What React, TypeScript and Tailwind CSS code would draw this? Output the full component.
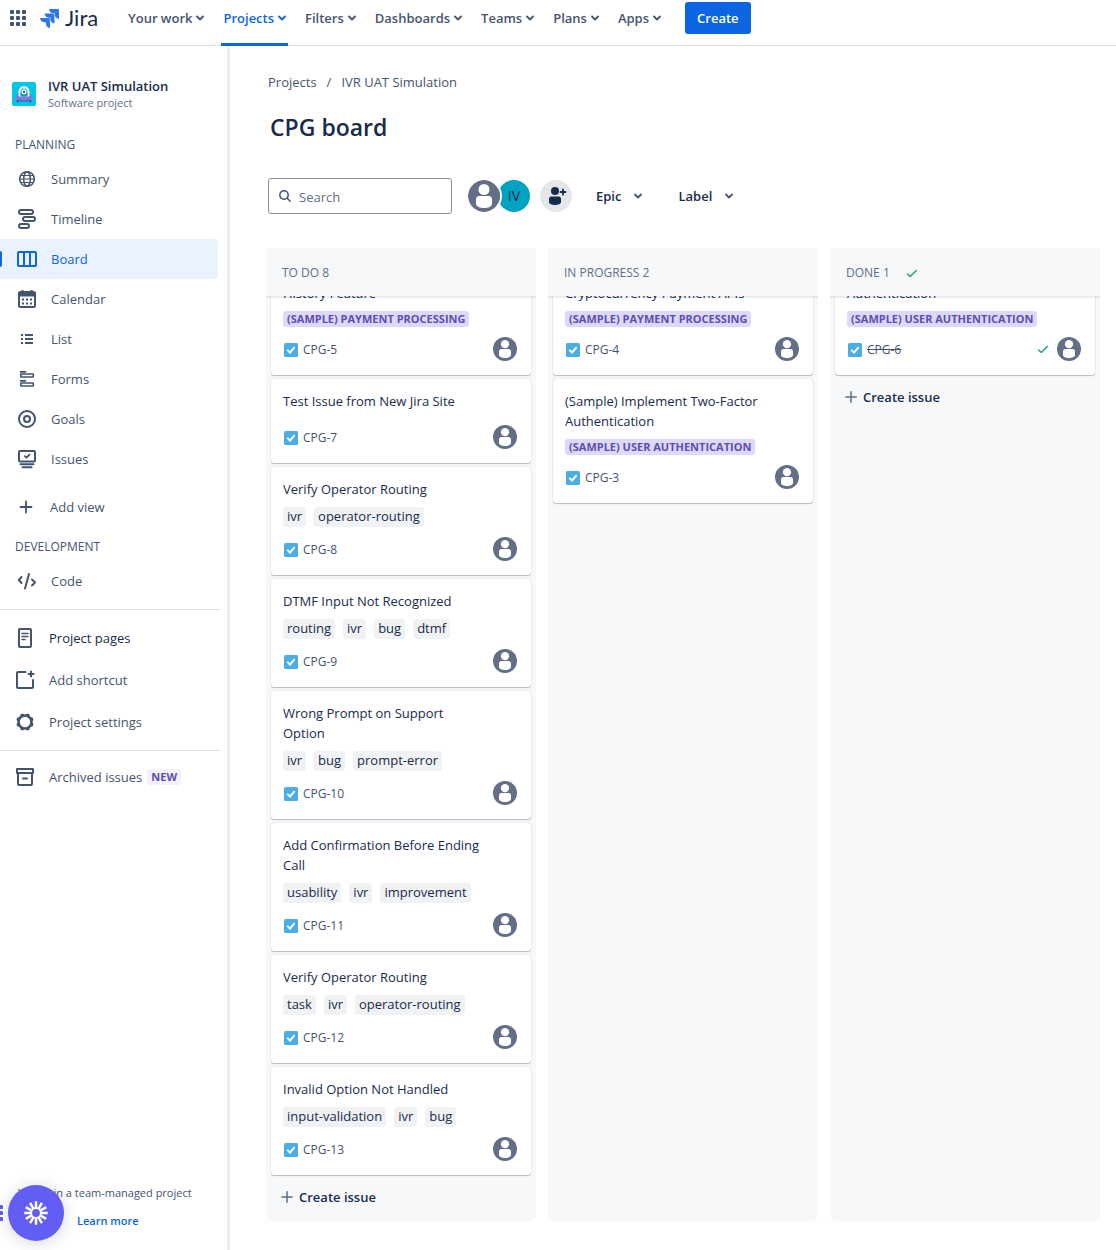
import React from "react";

type Issue = {
  id: string;
  title: string;
  epic?: string;
  labels?: string[];
  done?: boolean;
};

type Column = { name: string; count: number; issues: Issue[]; done?: boolean; canCreate?: boolean };

const columns: Column[] = [
  {
    name: "TO DO",
    count: 8,
    canCreate: true,
    issues: [
      { id: "CPG-5", title: "History Feature", epic: "(SAMPLE) PAYMENT PROCESSING" },
      { id: "CPG-7", title: "Test Issue from New Jira Site" },
      { id: "CPG-8", title: "Verify Operator Routing", labels: ["ivr", "operator-routing"] },
      { id: "CPG-9", title: "DTMF Input Not Recognized", labels: ["routing", "ivr", "bug", "dtmf"] },
      { id: "CPG-10", title: "Wrong Prompt on Support Option", labels: ["ivr", "bug", "prompt-error"] },
      { id: "CPG-11", title: "Add Confirmation Before Ending Call", labels: ["usability", "ivr", "improvement"] },
      { id: "CPG-12", title: "Verify Operator Routing", labels: ["task", "ivr", "operator-routing"] },
      { id: "CPG-13", title: "Invalid Option Not Handled", labels: ["input-validation", "ivr", "bug"] },
    ],
  },
  {
    name: "IN PROGRESS",
    count: 2,
    issues: [
      { id: "CPG-4", title: "Cryptocurrency Payment APIs", epic: "(SAMPLE) PAYMENT PROCESSING" },
      { id: "CPG-3", title: "(Sample) Implement Two-Factor Authentication", epic: "(SAMPLE) USER AUTHENTICATION" },
    ],
  },
  {
    name: "DONE",
    count: 1,
    done: true,
    canCreate: true,
    issues: [{ id: "CPG-6", title: "Authentication", epic: "(SAMPLE) USER AUTHENTICATION", done: true }],
  },
];

function Chevron({ className = "" }: { className?: string }) {
  return (
    <svg className={`h-2 w-2 shrink-0 ${className}`} viewBox="0 0 8 8" fill="none" stroke="currentColor" strokeWidth="1.8" strokeLinecap="round" strokeLinejoin="round" aria-hidden="true">
      <path d="M1 2.5 4 5.5 7 2.5" />
    </svg>
  );
}

function Tick() {
  return (
    <svg className="h-3 w-3" viewBox="0 0 12 12" fill="none" stroke="#22a06b" strokeWidth="1.4" strokeLinecap="round" strokeLinejoin="round" role="img" aria-label="Done">
      <path d="M1.5 7 4.3 9.5 10.3 3.500" />
    </svg>
  );
}

function Plus() {
  return (
    <svg className="h-3 w-3 text-[#626f86]" viewBox="0 0 12 12" stroke="currentColor" strokeWidth="1.5" strokeLinecap="round" aria-hidden="true">
      <path d="M6 .8v10.4M.8 6h10.4" />
    </svg>
  );
}

function Person({ className }: { className: string }) {
  return (
    <svg className={className} viewBox="0 0 32 32" role="img" aria-label="Unassigned">
      <circle cx="16" cy="16" r="16" fill="#626f86" />
      <circle cx="16" cy="9.5" r="5.5" fill="#fff" />
      <path d="M8 19.5a3.5 3.5 0 0 1 3.5-3.5h9a3.5 3.5 0 0 1 3.5 3.5v4.200c0 2.800-4 4.300-8 4.300s-8-1.500-8-4.300z" fill="#fff" />
    </svg>
  );
}

function TaskIcon() {
  return (
    <svg className="h-3.5 w-3.5" viewBox="0 0 14 14" role="img" aria-label="Task">
      <rect width="14" height="14" rx="1.500" fill="#4bade8" />
      <path d="M3.800 7.400 6 9.500 10.200 4.700" fill="none" stroke="#fff" strokeWidth="2" strokeLinecap="round" />
    </svg>
  );
}

const stroke = { fill: "none", stroke: "currentColor", strokeWidth: 2, strokeLinecap: "round", strokeLinejoin: "round" } as const;

const icons: Record<string, React.ReactNode> = {
  Summary: (
    <g {...stroke} strokeWidth="1.500">
      <circle cx="12" cy="12" r="7.300" />
      <ellipse cx="12" cy="12" rx="3.300" ry="7.300" />
      <path d="M4.700 12h14.600M6 8.500h12M6 15.500h12" strokeWidth="1.200" />
    </g>
  ),
  Timeline: (
    <g {...stroke}>
      <rect x="4" y="3" width="14" height="4" rx="2" />
      <rect x="8" y="10" width="12" height="4" rx="2" />
      <rect x="4" y="17" width="10" height="4" rx="2" />
    </g>
  ),
  Board: (
    <g {...stroke}>
      <rect x="3" y="5" width="18" height="14" rx="1" />
      <path d="M9 5v14M15 5v14" />
    </g>
  ),
  Calendar: (
    <g>
      <rect x="4" y="5" width="16" height="15" rx="1.500" {...stroke} />
      <path d="M3 5h18v4.500H3zM6.500 3h2v3h-2zM15.500 3h2v3h-2z" fill="currentColor" />
      <path d="M7 11.500h2v2H7zm4 0h2v2h-2zm4 0h2v2h-2zM7 15.500h2v2H7zm4 0h2v2h-2zm4 0h2v2h-2z" fill="currentColor" />
    </g>
  ),
  List: <path d="M6 7h2v2H6zm0 4h2v2H6zm0 4h2v2H6zM10 7h8v2h-8zm0 4h8v2h-8zm0 4h8v2h-8z" fill="currentColor" />,
  Forms: (
    <g {...stroke} strokeWidth="1.700">
      <path d="M5.500 4.800h5M5.500 13.800h5" />
      <rect x="5.800" y="7" width="12.500" height="3" rx=".5" />
      <rect x="5.800" y="16" width="12.500" height="3" rx=".5" />
    </g>
  ),
  Goals: (
    <g {...stroke}>
      <circle cx="12" cy="12" r="8" />
      <circle cx="12" cy="12" r="3" />
    </g>
  ),
  Issues: (
    <g {...stroke}>
      <rect x="4" y="4" width="16" height="10.500" rx="1" />
      <path d="M9.800 9.200l1.700 1.500 3-3" strokeWidth="1.800" />
      <path d="M5.500 17.200h13M7.500 20.200h9" />
    </g>
  ),
  "Add view": <path d="M12 6.500v11M6.500 12h11" {...stroke} strokeWidth="1.800" />,
  Code: <path d="M6.500 8 3.800 11l2.700 3M17 10.500l3 3-3 3M14 5l-4 14.500" {...stroke} />,
  "Project pages": (
    <g {...stroke}>
      <rect x="6" y="3" width="12" height="18" rx="1" />
      <path d="M9 7.500h6M9 10.500h6M9 13.500h3" strokeWidth="1.600" />
    </g>
  ),
  "Add shortcut": (
    <g {...stroke}>
      <path d="M12.500 4H5a1 1 0 0 0-1 1v14a1 1 0 0 0 1 1h14a1 1 0 0 0 1-1v-7" />
      <path d="M18 3.500v5M15.500 6h5" />
    </g>
  ),
  "Project settings": (
    <g>
      <circle cx="12" cy="12" r="6.500" fill="none" stroke="currentColor" strokeWidth="2.600" />
      {[22.5, 67.5, 112.5, 157.5, 202.5, 247.5, 292.5, 337.5].map((a) => (
        <rect key={a} x="10.200" y="3.200" width="3.600" height="3" rx="1.200" fill="currentColor" transform={`rotate(${a} 12 12)`} />
      ))}
    </g>
  ),
  "Archived issues": (
    <g {...stroke}>
      <rect x="4" y="4" width="16" height="4" />
      <path d="M5 8v11a1 1 0 0 0 1 1h12a1 1 0 0 0 1-1V8M10 13.500h4" />
    </g>
  ),
};

function NavIcon({ name }: { name: string }) {
  return (
    <svg className={`h-6 w-6 shrink-0 ${name === "Board" ? "text-[#0c66e4]" : "text-[#44546f]"}`} viewBox="0 0 24 24" aria-hidden="true">
      {icons[name]}
    </svg>
  );
}

function SideLink({ name, active }: { name: string; active?: boolean }) {
  return (
    <a
      href="#"
      aria-current={active ? "page" : undefined}
      className={`relative mr-[9px] flex h-10 items-center gap-3 rounded-r pl-[15px] ${active ? "bg-[#e9f2ff] text-[#0c66e4]" : "text-[#44546f]"}`}
    >
      {active && <span className="absolute left-0 top-3 h-4 w-0.5 rounded-r bg-[#0c66e4]" />}
      <NavIcon name={name} />
      {name}
    </a>
  );
}

function LowerLink({ name, dark, badge }: { name: string; dark?: boolean; badge?: string }) {
  return (
    <a href="#" className={`flex h-[42px] items-center pl-[13px] ${dark ? "text-[#172b4d]" : "text-[#44546f]"}`}>
      <NavIcon name={name} />
      <span className="ml-3">{name}</span>
      {badge && <span className="ml-[5px] rounded-[3px] bg-[#f3f0ff] px-1 text-[11px] leading-4 font-bold text-[#5e4db2]">{badge}</span>}
    </a>
  );
}

function TopNav() {
  const items = ["Your work", "Projects", "Filters", "Dashboards", "Teams", "Plans", "Apps"];
  return (
    <header className="flex h-[46px] shrink-0 border-b border-[#dcdfe4] pl-1.5">
      <button aria-label="Switch to another product" className="flex h-9 w-6 items-center justify-center text-[#44546f]">
        <svg className="h-4 w-4" viewBox="0 0 16 16" fill="currentColor" aria-hidden="true">
          {[0, 6, 12].map((y) => [0, 6, 12].map((x) => <rect key={`${x}-${y}`} x={x} y={y} width="4" height="4" rx="1" />))}
        </svg>
      </button>
      <a href="#" className="ml-2.5 flex h-9 w-[60px] items-center gap-1.5 font-['Lato',sans-serif] text-[22px] leading-6 font-normal text-[#172b4d]">
        <svg className="h-[19px] w-[19px] shrink-0" viewBox="0 0 24 24" aria-hidden="true">
          <defs>
            <linearGradient id="mark" x1="1" y1="0" x2="0" y2="1">
              <stop offset="0" stopColor="#3b82f0" />
              <stop offset=".4" stopColor="#2b75e6" />
              <stop offset=".7" stopColor="#388bff" />
            </linearGradient>
          </defs>
          <g fill="url(#mark)">
            <path d="M11.571 11.513H0a5.218 5.218 0 0 0 5.232 5.215h2.130v2.057A5.215 5.215 0 0 0 12.575 24V12.518a1.005 1.005 0 0 0-1.005-1.005z" />
            <path d="M17.294 5.757H5.736a5.215 5.215 0 0 0 5.215 5.214h2.129v2.058a5.218 5.218 0 0 0 5.215 5.214V6.758a1.001 1.001 0 0 0-1.001-1.001z" />
            <path d="M23.013 0H11.455a5.215 5.215 0 0 0 5.215 5.215h2.129v2.057A5.215 5.215 0 0 0 24 12.483V1.005A1.001 1.001 0 0 0 23.013 0Z" />
          </g>
        </svg>
        Jira
      </a>
      <nav aria-label="Main" className="ml-[26px] flex gap-[15px] font-semibold text-[#44546f]">
        {items.map((item) => (
          <button
            key={item}
            className={`flex h-[46px] items-center gap-1 border-b-[3px] px-0.5 pb-[7px] ${item === "Projects" ? "border-[#0c66e4] text-[#0c66e4]" : "border-transparent"}`}
          >
            {item}
            <Chevron />
          </button>
        ))}
      </nav>
      <button className="mt-0.5 ml-[22px] h-8 rounded-[3px] bg-[#0c66e4] px-3 font-semibold text-white">Create</button>
    </header>
  );
}

function Sidebar() {
  return (
    <aside className="flex w-[230px] shrink-0 flex-col border-r-[3px] border-[#ebecf0]">
      <div className="flex items-center gap-3 px-3 pt-[31px]">
        <svg className="h-6 w-6 shrink-0" viewBox="0 0 24 24" aria-hidden="true">
          <rect width="24" height="24" rx="2" fill="#00c7e6" />
          <path d="M5.500 19.500l2-3M18.500 19.500l-2-3" stroke="#5243aa" strokeWidth="2" strokeLinecap="round" />
          <ellipse cx="12" cy="15" rx="9.300" ry="3.800" fill="#8777d9" />
          <path d="M6.500 14V9.500a5.500 5.500 0 0 1 11 0V14c-2.500 1.500-8.500 1.500-11 0z" fill="#dff7fc" />
          <path d="M8.500 14v-4a3.500 3.500 0 0 1 7 0v4c-2 1-5 1-7 0z" fill="#00a3bf" />
          <circle cx="12" cy="9.800" r="2.500" fill="#fff" />
          <circle cx="12" cy="9.800" r="1.100" fill="#172b4d" />
          <path d="M8.500 14c2 1 5 1 7 0v2c-2 1-5 1-7 0z" fill="#8777d9" />
          <path d="M8 18.500c2 1 6 1 8 0" stroke="#5243aa" strokeWidth="1.200" fill="none" />
        </svg>
        <div>
          <p className="leading-[18px] font-semibold text-[#172b4d]">IVR UAT Simulation</p>
          <p className="text-[11px] leading-4 text-[#626f86]">Software project</p>
        </div>
      </div>
      <nav aria-label="Project" className="flex flex-col">
        <h2 className="mt-[26px] mb-1.5 pl-[15px] text-[12px] leading-4 font-medium text-[#44546f]">PLANNING</h2>
        {["Summary", "Timeline", "Board", "Calendar", "List", "Forms", "Goals", "Issues"].map((n) => (
          <SideLink key={n} name={n} active={n === "Board"} />
        ))}
        <button className="mt-2 flex h-10 items-center gap-3 pl-3.5 text-[#44546f]">
          <NavIcon name="Add view" />
          Add view
        </button>
        <h2 className="mt-3 mb-1.5 pl-[15px] text-[12px] leading-4 font-medium text-[#44546f]">DEVELOPMENT</h2>
        <SideLink name="Code" />
        <div className="mt-2 mr-[7px] border-y border-[#dcdfe4] py-[7px]">
          <LowerLink name="Project pages" dark />
          <LowerLink name="Add shortcut" />
          <LowerLink name="Project settings" />
        </div>
        <div className="mt-[5px]">
          <LowerLink name="Archived issues" badge="NEW" />
        </div>
      </nav>
      <footer className="mt-auto pb-5 pl-[18px] text-[11px] leading-[18px]">
        <p className="text-[#44546f]">You're in a team-managed project</p>
        <p className="mt-2.5 pl-[59px]">
          <a href="#" className="font-semibold text-[#0c66e4]">Learn more</a>
        </p>
      </footer>
    </aside>
  );
}

function Card({ issue }: { issue: Issue }) {
  const tagged = issue.epic || issue.labels;
  return (
    <article className="rounded-[3px] bg-white pt-3 pr-3.5 pb-3.5 pl-3 shadow-[0_1px_1px_rgba(9,30,66,0.25),0_0_1px_rgba(9,30,66,0.31)]">
      <h3 className="pr-8 leading-5 text-[#172b4d]">{issue.title}</h3>
      {issue.epic && (
        <p className="mt-2 flex">
          <span className="rounded-[3px] bg-[#dfd8fd] px-1 text-[11px] leading-4 font-bold whitespace-nowrap text-[#5e4db2]">{issue.epic}</span>
        </p>
      )}
      {issue.labels && (
        <ul className="mt-2 flex gap-2">
          {issue.labels.map((l) => (
            <li key={l} className="rounded-[3px] bg-[#f1f2f4] px-1 pb-0.5 leading-[18px] text-[#172b4d]">
              {l}
            </li>
          ))}
        </ul>
      )}
      <div className={`flex h-6 items-center ${tagged ? "mt-2.5" : "mt-3.5"}`}>
        <span className="flex items-center gap-[5px] pt-0.5 pl-px">
          <TaskIcon />
          <a href="#" className={`text-[12px] leading-4 font-medium text-[#44546f] ${issue.done ? "line-through" : ""}`}>{issue.id}</a>
        </span>
        <span className="ml-auto flex items-center gap-2">
          {issue.done && <Tick />}
          <Person className="h-6 w-6" />
        </span>
      </div>
    </article>
  );
}

function BoardColumn({ column }: { column: Column }) {
  return (
    <section className="flex min-w-0 flex-col rounded-b-md bg-[#f7f8f9]">
      <h2 className="z-10 flex h-12 items-center gap-4 px-4 pt-0.5 text-[12px] font-medium text-[#626f86] shadow-[0_2px_0_rgba(9,30,66,0.08)]">
        {column.name} {column.count}
        {column.done && <Tick />}
      </h2>
      <div className="overflow-hidden px-[5px] pb-1">
        <div className="-mt-[25px] flex flex-col gap-1">
          {column.issues.map((issue) => (
            <Card key={issue.id} issue={issue} />
          ))}
        </div>
      </div>
      {column.canCreate && (
        <button className="mb-1 flex h-9 items-center gap-1.5 pl-[15px] font-semibold text-[#172b4d]">
          <Plus />
          Create issue
        </button>
      )}
    </section>
  );
}

function FilterButton({ label }: { label: string }) {
  return (
    <button className="flex h-8 items-center gap-[13px] font-semibold text-[#172b4d]">
      {label}
      <Chevron className="text-[#44546f]" />
    </button>
  );
}

function HelpBubble() {
  return (
    <div className="absolute bottom-[9px] left-0 flex items-center gap-[5px]">
      <svg className="h-4 w-[3px]" viewBox="0 0 3 16" fill="#625df5" aria-hidden="true">
        <path d="M0 0h1.500a1.500 1.500 0 0 1 0 4H0zM0 6h1.500a1.500 1.500 0 0 1 0 4H0zM0 12h1.500a1.500 1.500 0 0 1 0 4H0z" />
      </svg>
      <button aria-label="Open recorder" className="flex h-14 w-14 items-center justify-center rounded-full bg-[#625df5] shadow-[0_2px_16px_rgba(0,0,0,0.16)]">
        <svg className="h-6 w-6" viewBox="-12 -12 24 24" fill="none" stroke="#fff" aria-hidden="true">
          <circle r="4.800" strokeWidth="1.800" />
          {Array.from({ length: 12 }, (_, i) => (
            <path key={i} d="M0-4.800V-11.800" strokeWidth="2.500" transform={`rotate(${i * 30})`} />
          ))}
        </svg>
      </button>
    </div>
  );
}

export default function App() {
  return (
    <div className="relative flex min-h-screen flex-col bg-white font-['Open_Sans','Noto_Sans',sans-serif] text-[13px] leading-5">
      <TopNav />
      <div className="flex grow">
        <Sidebar />
        <main className="flex min-w-0 grow flex-col pt-[26px] pr-4 pb-[29px] pl-9">
          <nav aria-label="Breadcrumb" className="flex gap-2.5 pl-0.5 text-[#44546f]">
            <a href="#">Projects</a>
            <span>/</span>
            <a href="#">IVR UAT Simulation</a>
          </nav>
          <h1 className="mt-[21px] pl-1 text-[23px] leading-7 font-semibold text-[#172b4d]">CPG board</h1>
          <div className="mt-[37px] flex items-center pl-0.5">
            <label className="flex h-9 w-[184px] items-center gap-2 rounded-[3px] border border-[#8590a2] px-2.5">
              <svg className="h-3 w-3 shrink-0 text-[#44546f]" viewBox="0 0 12 12" fill="none" stroke="currentColor" strokeWidth="1.500" strokeLinecap="round" aria-hidden="true">
                <circle cx="5" cy="5" r="4.200" />
                <path d="M8.200 8.200 11.200 11.200" />
              </svg>
              <input type="text" aria-label="Search" placeholder="Search" className="w-full min-w-0 bg-transparent pt-0.5 outline-none placeholder:text-[#626f86]" />
            </label>
            <div className="ml-4 flex items-center">
              <Person className="relative z-10 h-8 w-8 rounded-full shadow-[0_0_0_2px_#fff]" />
              <span className="-ml-0.5 flex h-8 w-8 items-center justify-center rounded-full bg-[#00a3bf] text-[14px] font-medium text-[#172b4d]">IV</span>
            </div>
            <button aria-label="Add people" className="ml-2.5 flex h-8 w-8 items-center justify-center rounded-full bg-[#e4e6ea]">
              <svg className="h-6 w-6" viewBox="0 0 24 24" fill="#172b4d" aria-hidden="true">
                <circle cx="11" cy="7" r="4" />
                <path d="M5 15a2.500 2.500 0 0 1 2.500-2.500h7A2.500 2.500 0 0 1 17 15v3c0 2-3 3-6 3s-6-1-6-3z" />
                <path d="M19 5.500v5M16.500 8h5" stroke="#172b4d" strokeWidth="1.800" strokeLinecap="round" />
              </svg>
            </button>
            <div className="ml-6 flex gap-9">
              <FilterButton label="Epic" />
              <FilterButton label="Label" />
            </div>
          </div>
          <div className="mt-[34px] grid grow grid-cols-3 gap-3">
            {columns.map((c) => (
              <BoardColumn key={c.name} column={c} />
            ))}
          </div>
        </main>
      </div>
      <HelpBubble />
    </div>
  );
}
